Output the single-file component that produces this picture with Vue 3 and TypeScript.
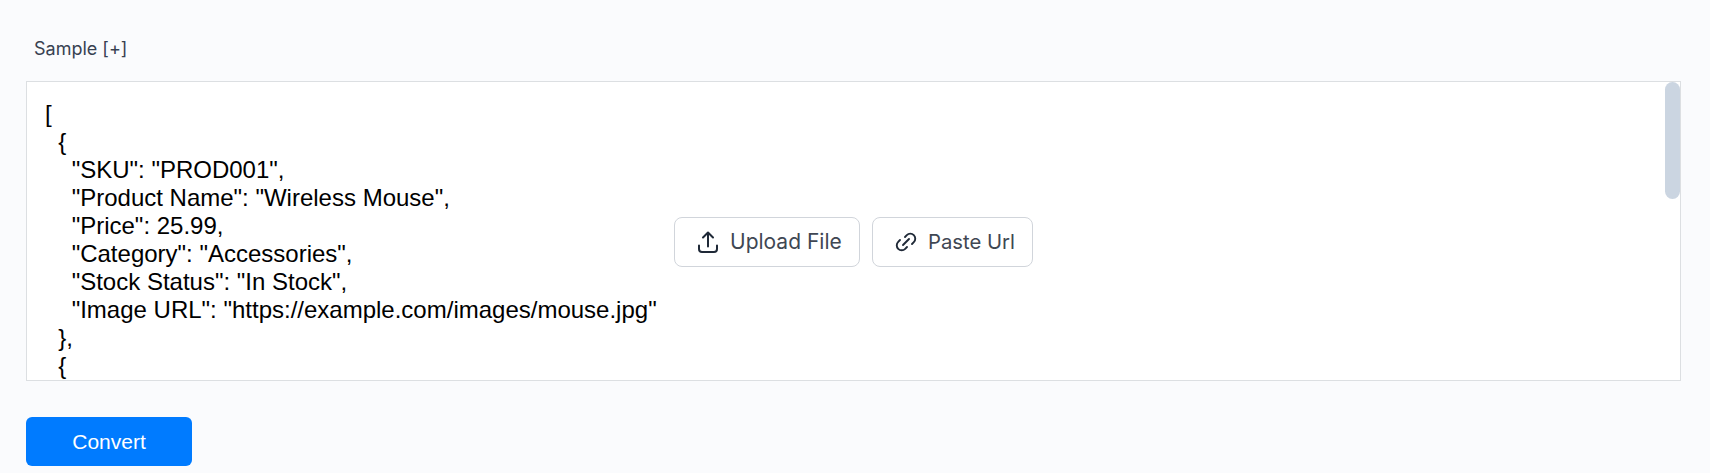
<script setup lang="ts">
const sample = `[
  {
    "SKU": "PROD001",
    "Product Name": "Wireless Mouse",
    "Price": 25.99,
    "Category": "Accessories",
    "Stock Status": "In Stock",
    "Image URL": "https://example.com/images/mouse.jpg"
  },
  {`
</script>

<template>
  <main class="page">
    <div class="label">Sample [+]</div>
    <section class="editor">
      <pre class="code">{{ sample }}</pre>
      <div class="thumb"></div>
      <div class="actions">
        <button class="ghost upload" type="button">
          <svg viewBox="0 0 24 24" width="24" height="24" fill="none" stroke="#1f2937" stroke-width="2" stroke-linecap="round" stroke-linejoin="round">
            <path d="M3 15.500V19a3 3 0 0 0 3 3h12a3 3 0 0 0 3-3v-3.500" />
            <path d="M12 16.500V3M7 7.500 12 2.500l5 5" />
          </svg>
          <span>Upload File</span>
        </button>
        <button class="ghost paste" type="button">
          <svg viewBox="0 0 24 24" width="24" height="24" fill="none" stroke="#1f2937" stroke-width="1.900" stroke-linecap="round" stroke-linejoin="round">
            <path d="M11 7l1.800-1.800a4.900 4.900 0 0 1 7 7L18 14" />
            <path d="M13 17l-1.800 1.800a4.900 4.900 0 0 1-7-7L6 10" />
            <path d="M9 15l6-6" />
          </svg>
          <span>Paste Url</span>
        </button>
      </div>
    </section>
    <button class="convert" type="button">Convert</button>
  </main>
</template>

<style>
html, body { margin: 0; background: #fafbfd; }
</style>

<style scoped>
.page {
  box-sizing: border-box;
  height: 473px;
  padding: 38px 29px 0 26px;
  background: #fafbfd;
}
.label {
  padding-left: 8px;
  font: 18px/22px Inter, sans-serif;
  color: #374151;
}
.editor {
  position: relative;
  box-sizing: border-box;
  height: 300px;
  margin-top: 21px;
  background: #fff;
  border: 1px solid #dcdfe2;
  overflow: hidden;
}
.code {
  margin: 0;
  padding: 18px 18px;
  font: 24px/28px "Liberation Sans", Arial, sans-serif;
  color: #000;
  white-space: pre;
}
.thumb {
  position: absolute;
  top: 0;
  right: 0;
  width: 15px;
  height: 117px;
  border-radius: 8px;
  background: #cbd5e1;
}
.actions {
  position: absolute;
  top: 135px;
  left: 0;
  right: 0;
  display: flex;
  justify-content: center;
  gap: 12px;
}
.ghost {
  display: flex;
  align-items: center;
  gap: 10px;
  box-sizing: border-box;
  height: 50px;
  padding: 0 0 0 21px;
  background: #fff;
  border: 1px solid #d1d5db;
  border-radius: 8px;
  line-height: 24px;
  font-family: Inter, sans-serif;
  color: #3f4753;
}
.upload { width: 186px; font-size: 21px; }
.paste { width: 161px; font-size: 20.300px; }
.convert {
  display: block;
  width: 166px;
  height: 49px;
  margin-top: 36px;
  padding: 0;
  background: #007bff;
  border: 0;
  border-radius: 6px;
  font: 21px/24px "Liberation Sans", Arial, sans-serif;
  color: #fff;
}
</style>
